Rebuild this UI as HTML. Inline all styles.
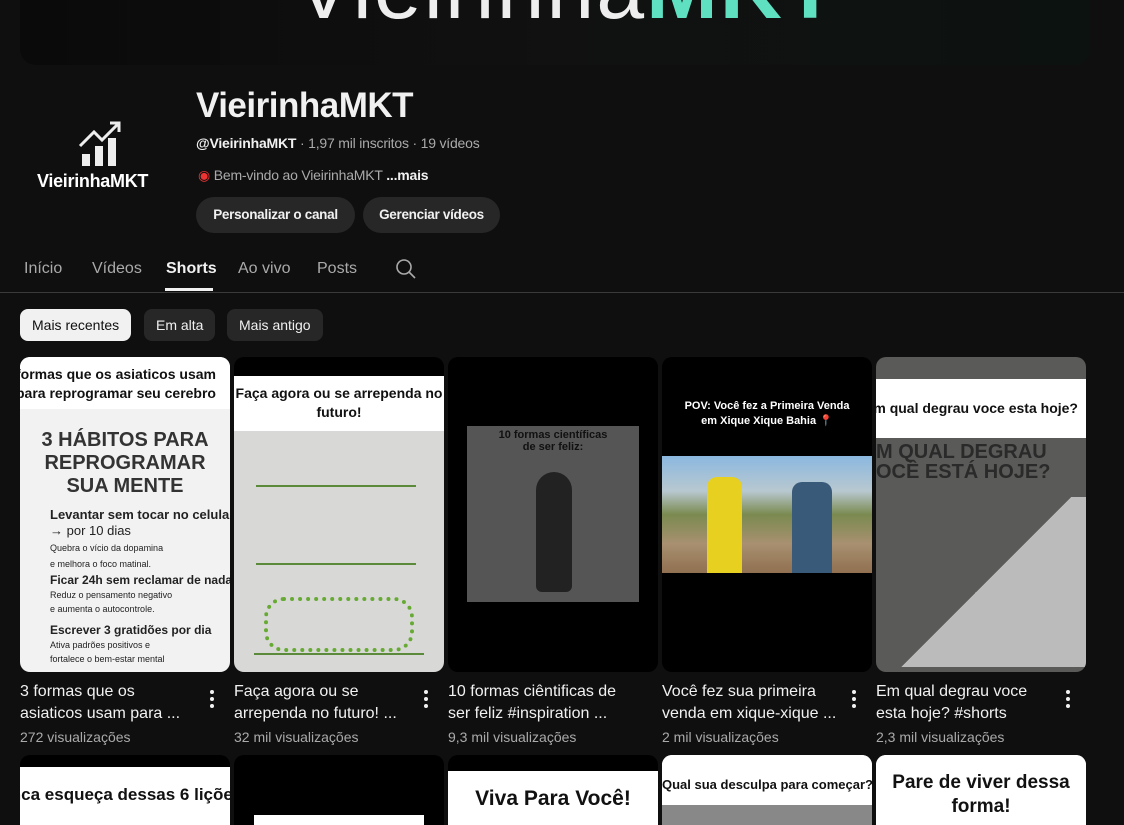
<!DOCTYPE html>
<html><head><meta charset="utf-8"><style>
*{margin:0;padding:0;box-sizing:border-box}
body{width:1124px;height:819px;overflow:hidden;background:#0f0f0f;font-family:"Liberation Sans",sans-serif;color:#f1f1f1;position:relative}
.abs{position:absolute}
.banner{left:20px;top:-10px;width:1070px;height:75px;border-radius:0 0 16px 16px;background:linear-gradient(90deg,#0a0a0a,#111 50%,#0c1210);overflow:hidden}
.btn{position:absolute;top:197px;height:36px;border-radius:18px;background:#272727;font-size:13.5px;font-weight:bold;line-height:36px;text-align:center}
.tab{position:absolute;top:260px;font-size:16px;color:#aaa}
.chip{position:absolute;top:309px;height:32px;border-radius:8px;background:#272727;font-size:14px;line-height:32px;padding:0 12px}
.th{position:absolute;top:357px;width:210px;height:315px;border-radius:10px;overflow:hidden;background:#000}
.t{position:absolute;top:681px;font-size:16px;line-height:22px;width:175px;color:#f1f1f1}
.v{position:absolute;top:729px;font-size:14px;color:#aaa}
.dots{position:absolute;top:690px;width:4px}
.dots i{display:block;width:4px;height:4px;border-radius:2px;background:#f1f1f1;margin-bottom:3px}
.th2{position:absolute;top:755px;width:210px;height:70px;border-radius:10px 10px 0 0;overflow:hidden;background:#000}
.wt{background:#fff;color:#111;font-weight:bold;white-space:nowrap;text-align:center}
</style></head><body>
<div class="abs banner"><div class="abs" style="left:275px;top:-50px;font-size:86px;color:#eee;letter-spacing:2px;white-space:nowrap">Vieirinha<span style="color:#5fe0c0;font-weight:bold">MKT</span></div></div>

<svg class="abs" style="left:76px;top:120px" width="48" height="48" viewBox="0 0 48 48"><path d="M4 26 L18 12 L26 20 L42 4" stroke="#eee" stroke-width="3" fill="none"/><path d="M34 3 L43 3 L43 12" stroke="#eee" stroke-width="3" fill="none"/><rect x="6" y="34" width="8" height="12" fill="#eee"/><rect x="19" y="26" width="8" height="20" fill="#eee"/><rect x="32" y="18" width="8" height="28" fill="#eee"/></svg>
<div class="abs" style="left:37px;top:171px;font-size:18px;font-weight:bold;color:#fff;letter-spacing:-0.3px">VieirinhaMKT</div>

<div class="abs" style="left:196px;top:86px;font-size:35px;font-weight:bold;color:#f1f1f1;letter-spacing:-0.5px">VieirinhaMKT</div>
<div class="abs" style="left:196px;top:135px;font-size:14px;color:#aaa;letter-spacing:-0.2px"><b style="color:#f1f1f1">@VieirinhaMKT</b> · 1,97 mil inscritos · 19 vídeos</div>
<div class="abs" style="left:198px;top:167px;font-size:14px;color:#aaa;letter-spacing:-0.2px"><span style="color:#e33">◉</span> Bem-vindo ao VieirinhaMKT <b style="color:#f1f1f1">...mais</b></div>
<div class="btn" style="left:196px;width:159px;letter-spacing:-0.3px">Personalizar o canal</div>
<div class="btn" style="left:363px;width:137px;letter-spacing:-0.3px">Gerenciar vídeos</div>

<div class="tab" style="left:24px">Início</div>
<div class="tab" style="left:92px">Vídeos</div>
<div class="tab" style="left:166px;color:#f1f1f1;font-weight:bold">Shorts</div>
<div class="abs" style="left:165px;top:288px;width:48px;height:3px;background:#f1f1f1"></div>
<div class="tab" style="left:238px">Ao vivo</div>
<div class="tab" style="left:317px">Posts</div>
<svg class="abs" style="left:395px;top:258px" width="22" height="22" viewBox="0 0 22 22"><circle cx="9" cy="9" r="7" stroke="#aaa" stroke-width="1.6" fill="none"/><path d="M14 14 L20 20" stroke="#aaa" stroke-width="1.6"/></svg>
<div class="abs" style="left:0;top:292px;width:1124px;height:1px;background:#3a3a3a"></div>

<div class="chip" style="left:20px;background:#f1f1f1;color:#0f0f0f">Mais recentes</div>
<div class="chip" style="left:144px">Em alta</div>
<div class="chip" style="left:227px">Mais antigo</div>

<div class="th" style="left:20px;background:#f2f2f2">
<div class="wt" style="height:52px;font-size:14px;line-height:19px;padding-top:8px;margin-left:-18px">formas que os asiaticos usam<br>para reprogramar seu cerebro</div>
<div class="abs" style="top:72px;width:210px;text-align:center;color:#333;font-weight:bold;font-size:20px;line-height:23px">3 HÁBITOS PARA<br>REPROGRAMAR<br>SUA MENTE</div>
<div class="abs" style="left:30px;top:150px;color:#222;font-size:13px;font-weight:bold;line-height:16px;white-space:nowrap">Levantar sem tocar no celular<br><span style="font-weight:normal">→ por 10 dias</span><br><span style="font-weight:normal;font-size:9px;line-height:11px">Quebra o vício da dopamina<br>e melhora o foco matinal.</span></div>
<div class="abs" style="left:30px;top:216px;color:#222;font-size:12px;font-weight:bold;white-space:nowrap">Ficar 24h sem reclamar de nada<br><span style="font-weight:normal;font-size:9px">Reduz o pensamento negativo<br>e aumenta o autocontrole.</span></div>
<div class="abs" style="left:30px;top:266px;color:#222;font-size:12px;font-weight:bold;white-space:nowrap">Escrever 3 gratidões por dia<br><span style="font-weight:normal;font-size:9px">Ativa padrões positivos e<br>fortalece o bem-estar mental</span></div>
</div>
<div class="th" style="left:234px">
<div class="wt" style="position:absolute;top:19px;width:210px;height:55px;font-size:14px;line-height:19px;padding-top:8px">Faça agora ou se arrependa no<br>futuro!</div>
<div class="abs" style="top:74px;width:210px;height:241px;background:#d8d8d6"></div>
<div class="abs" style="left:22px;top:128px;width:160px;height:2px;background:#5a8a3a"></div>
<div class="abs" style="left:22px;top:206px;width:160px;height:2px;background:#5a8a3a"></div>
<div class="abs" style="left:20px;top:296px;width:170px;height:2px;background:#5a8a3a"></div>
<div class="abs" style="left:30px;top:240px;width:150px;height:55px;border:4px dotted #6a3;border-radius:20px"></div>
</div>
<div class="th" style="left:448px">
<div class="abs" style="left:19px;top:69px;width:172px;height:176px;background:#555"></div>
<div class="abs" style="left:19px;top:72px;width:172px;text-align:center;font-weight:bold;font-size:11px;color:#111">10 formas científicas<br>de ser feliz:</div>
<div class="abs" style="left:88px;top:115px;width:36px;height:120px;background:#222;border-radius:18px 18px 6px 6px"></div>
</div>
<div class="th" style="left:662px">
<div class="abs" style="top:42px;width:210px;text-align:center;font-weight:bold;font-size:11px;line-height:15px;color:#fff">POV: Você fez a Primeira Venda<br>em Xique Xique Bahia 📍</div>
<div class="abs" style="top:99px;width:210px;height:117px;background:linear-gradient(#8bb8e0 0,#b8c8d0 30%,#7a8a50 50%,#a89070 75%,#907050)"></div>
<div class="abs" style="left:45px;top:120px;width:35px;height:96px;background:#e8d020;border-radius:10px 10px 0 0"></div>
<div class="abs" style="left:130px;top:125px;width:40px;height:91px;background:#3a5a7a;border-radius:10px 10px 0 0"></div>
</div>
<div class="th" style="left:876px;background:#5a5a58">
<div class="wt" style="position:absolute;top:22px;width:210px;height:59px;font-size:14px;line-height:59px;text-indent:-20px">Em qual degrau voce esta hoje?</div>
<div class="abs" style="left:0;top:85px;font-size:20px;font-weight:bold;color:#2a2a2a;line-height:20px">M QUAL DEGRAU<br>OCÊ ESTÁ HOJE?</div>
<div class="abs" style="left:10px;top:140px;width:200px;height:170px;background:linear-gradient(135deg,transparent 50%,#bbb 50%)"></div>
</div>

<div class="t" style="left:20px">3 formas que os asiaticos usam para ...</div>
<div class="t" style="left:234px">Faça agora ou se arrependa no futuro! ...</div>
<div class="t" style="left:448px">10 formas ciêntificas de ser feliz #inspiration ...</div>
<div class="t" style="left:662px">Você fez sua primeira venda em xique-xique ...</div>
<div class="t" style="left:876px">Em qual degrau voce esta hoje? #shorts</div>
<div class="v" style="left:20px">272 visualizações</div>
<div class="v" style="left:234px">32 mil visualizações</div>
<div class="v" style="left:448px">9,3 mil visualizações</div>
<div class="v" style="left:662px">2 mil visualizações</div>
<div class="v" style="left:876px">2,3 mil visualizações</div>
<div class="dots" style="left:210px"><i></i><i></i><i></i></div>
<div class="dots" style="left:424px"><i></i><i></i><i></i></div>
<div class="dots" style="left:852px"><i></i><i></i><i></i></div>
<div class="dots" style="left:1066px"><i></i><i></i><i></i></div>

<div class="th2" style="left:20px"><div class="wt" style="position:absolute;top:12px;width:210px;height:60px;font-size:17px;line-height:56px;text-indent:-30px">nunca esqueça dessas 6 lições</div></div>
<div class="th2" style="left:234px"><div class="abs" style="left:20px;top:60px;width:170px;height:10px;background:#fff"></div></div>
<div class="th2" style="left:448px"><div class="wt" style="position:absolute;top:16px;width:210px;height:60px;font-size:21px;line-height:56px">Viva Para Você!</div></div>
<div class="th2" style="left:662px;background:#fff"><div class="wt" style="font-size:13px;line-height:20px;padding-top:20px">Qual sua desculpa para começar?</div><div class="abs" style="top:50px;width:210px;height:20px;background:#888"></div></div>
<div class="th2" style="left:876px;background:#fff"><div class="wt" style="font-size:19px;line-height:24px;padding-top:16px">Pare de viver dessa<br>forma!</div></div>
</body></html>
